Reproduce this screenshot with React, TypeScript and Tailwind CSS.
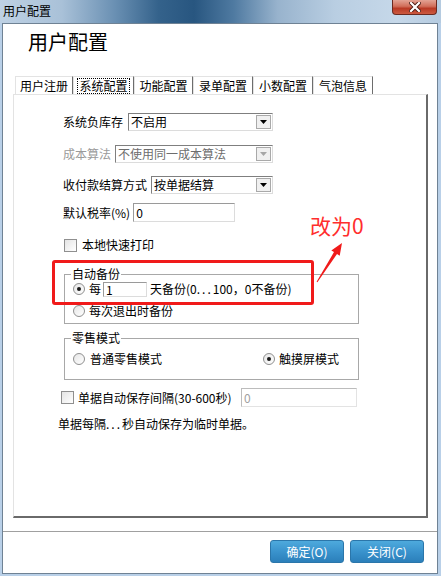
import React from "react";

const tabs = [
  { label: "用户注册", w: "w-[58px]" },
  { label: "系统配置", w: "w-[61px]", active: true },
  { label: "功能配置", w: "w-[59px]" },
  { label: "录单配置", w: "w-[60px]" },
  { label: "小数配置", w: "w-[60px]" },
  { label: "气泡信息", w: "w-[60px]" },
];

const Select = ({ className, value, disabled }: { className: string; value: string; disabled?: boolean }) => (
  <div
    className={`flex h-[18px] items-center border border-[#7f7f7f] border-b-[#dcdcdc] border-r-[#dcdcdc] bg-white ${className}`}
  >
    <span className={`flex-1 pl-[2px] leading-[16px] ${disabled ? "text-[#6d6d6d]" : "text-black"}`}>{value}</span>
    <div className="mr-[1px] flex h-[14px] w-[15px] items-center justify-center border border-[#a9a9a9] bg-[#f0f0f0]">
      <svg width="7" height="4" viewBox="0 0 7 4">
        <path d="M0 0h7L3.5 4z" fill={disabled ? "#a6a6a6" : "#000"} />
      </svg>
    </div>
  </div>
);

const Radio = ({ checked }: { checked?: boolean }) => (
  <span className="flex h-[12px] w-[12px] shrink-0 items-center justify-center rounded-full border border-[#8f8f8f] bg-[linear-gradient(135deg,#e6e6e6,#ffffff)]">
    {checked && <span className="h-[4px] w-[4px] rounded-full bg-[#1a1a1a]" />}
  </span>
);

const Checkbox = () => (
  <span className="h-[13px] w-[13px] shrink-0 border border-[#8f8f8f] bg-[linear-gradient(135deg,#e4e4e4,#ffffff)]" />
);

const Button = ({ children }: { children: React.ReactNode }) => (
  <div className="h-[23px] w-[74px] rounded-[3px] border border-[#2b76aa] bg-[linear-gradient(180deg,#4eaadd_0%,#3a93cd_50%,#2b7fba_100%)] text-center leading-[21px] text-white">
    {children}
  </div>
);

export default function App() {
  return (
    <div className="relative h-[576px] w-[441px] overflow-hidden bg-[#b9d0e8] font-['Noto_Sans_CJK_SC',sans-serif] text-[12px] text-black">
      {/* title bar */}
      <div className="flex h-[23px] items-start justify-between bg-[linear-gradient(90deg,#bed1e4_0%,#a9c1d8_14%,#6a90b3_26%,#34628b_36%,#285680_44%,#4f7aa1_53%,#98b3cd_63%,#b9cee2_76%,#c6d8e9_90%,#b5cbe0_100%)]">
        <span className="pl-[3px] pt-[3px] leading-[16px]">用户配置</span>
        <div className="mr-[4px] flex h-[15px] w-[45px] items-center justify-center rounded-b-[4px] border border-t-0 border-[#6b2a20] bg-[linear-gradient(180deg,#e3a394_0%,#d16e5a_45%,#b93a25_60%,#cc5a40_100%)]">
          <svg width="12" height="10" viewBox="0 0 12 10">
            <path d="M2 1l8 8M10 1L2 9" stroke="#4a1a12" strokeWidth="4" strokeLinecap="square" />
            <path d="M2 1l8 8M10 1L2 9" stroke="#ffffff" strokeWidth="2.2" strokeLinecap="square" />
          </svg>
        </div>
      </div>

      {/* client area */}
      <div className="ml-[2px] flex h-[551px] w-[436px] flex-col border border-[#6f8294] bg-white">
        <div className="h-[52px] pl-[25px] pt-[6px] text-[20px] leading-[24px]">用户配置</div>

        {/* tabs */}
        <div className="ml-[12px] flex h-[18px]">
          {tabs.map((t) => (
            <div
              key={t.label}
              className={`flex h-[18px] items-center justify-center border-l border-t border-l-[#e3e3e3] border-t-[#e3e3e3] border-r border-r-[#6d6d6d] bg-white ${t.w}`}
            >
              {t.active ? (
                <span className="border border-dotted border-black px-[1px] leading-[14px]">{t.label}</span>
              ) : (
                <span className="leading-[16px]">{t.label}</span>
              )}
            </div>
          ))}
        </div>

        {/* tab panel */}
        <div className="ml-[10px] flex h-[424px] w-[415px] flex-col border-b-2 border-l border-r-2 border-t border-b-[#6a6a6a] border-l-[#e3e3e3] border-r-[#6a6a6a] border-t-[#e3e3e3]">
          <div className="ml-[49px] mt-[18px] flex items-center gap-[5px]">
            <span className="leading-[16px]">系统负库存</span>
            <Select className="w-[145px]" value="不启用" />
          </div>
          <div className="ml-[49px] mt-[14px] flex items-center gap-[4px]">
            <span className="leading-[16px] text-[#9a9a9a]">成本算法</span>
            <Select className="w-[158px]" value="不使用同一成本算法" disabled />
          </div>
          <div className="ml-[49px] mt-[13px] flex items-center gap-[4px]">
            <span className="leading-[16px]">收付款结算方式</span>
            <Select className="w-[122px]" value="按单据结算" />
          </div>
          <div className="ml-[49px] mt-[9px] flex items-center gap-[3px]">
            <span className="leading-[16px]">默认税率(%)</span>
            <div className="h-[19px] w-[102px] border border-[#9a9a9a] border-b-[#dcdcdc] border-r-[#dcdcdc] pl-[2px] leading-[17px]">0</div>
          </div>
          <div className="ml-[50px] mt-[15px] flex h-[16px] items-center gap-[5px]">
            <Checkbox />
            <span className="leading-[16px]">本地快速打印</span>
          </div>

          <fieldset className="ml-[50px] mt-[15px] w-[295px] border border-[#a8a8a8] pb-[4px]">
            <legend className="ml-[6px] px-[1px] leading-[12px]">自动备份</legend>
            <div className="mt-[1px] flex h-[16px] items-center pl-[8px]">
              <Radio checked />
              <span className="ml-[4px] leading-[16px]">每</span>
              <div className="ml-[2px] h-[15px] w-[44px] border border-[#9a9a9a] border-b-[#dcdcdc] border-r-[#dcdcdc] pl-[2px] leading-[13px]">1</div>
              <span className="ml-[3px] leading-[16px]">
                天备份(0<span className="tracking-[2px]">...</span>100，0不备份)
              </span>
            </div>
            <div className="mt-[6px] flex h-[16px] items-center pl-[8px]">
              <Radio />
              <span className="ml-[4px] leading-[16px]">每次退出时备份</span>
            </div>
          </fieldset>

          <fieldset className="ml-[50px] mt-[7px] w-[295px] border border-[#a8a8a8] pb-[12px]">
            <legend className="ml-[6px] px-[1px] leading-[14px]">零售模式</legend>
            <div className="mt-[6px] flex h-[16px] items-center pl-[8px]">
              <Radio />
              <span className="ml-[5px] w-[173px] leading-[16px]">普通零售模式</span>
              <Radio checked />
              <span className="ml-[4px] leading-[16px]">触摸屏模式</span>
            </div>
          </fieldset>

          <div className="ml-[47px] mt-[8px] flex h-[19px] items-center">
            <Checkbox />
            <span className="ml-[4px] leading-[16px]">单据自动保存间隔(30-600秒)</span>
            <div className="ml-auto mr-[69px] h-[19px] w-[116px] border border-[#bcbcbc] border-b-[#e3e3e3] border-r-[#e3e3e3] pl-[2px] leading-[17px] text-[#a0a0a0]">0</div>
          </div>
          <div className="ml-[44px] mt-[9px] leading-[16px]">
            单据每隔<span className="tracking-[2px]">...</span>秒自动保存为临时单据。
          </div>
        </div>

        <div className="mt-[13px] h-[1px] bg-[#a0a0a0]" />
        <div className="mt-[8px] flex justify-end gap-[6px] pr-[13px]">
          <Button>确定(O)</Button>
          <Button>关闭(C)</Button>
        </div>
      </div>

      {/* annotation overlay */}
      <div className="absolute left-[52px] top-[260px] h-[45px] w-[262px] rounded-[3px] border-[3px] border-[#f01a1a]" />
      <svg className="absolute left-[305px] top-[238px]" width="45" height="50" viewBox="0 0 45 50">
        <polygon
          points="11.6,43.7 29,14.1 26.3,12.4 37,5 34.7,17.8 32,16.1 12.4,44.3"
          fill="#f01a1a"
        />
      </svg>
      <div className="absolute left-[310px] top-[214px] text-[21px] leading-[22px] text-[#ff2d2d]">改为0</div>
    </div>
  );
}
